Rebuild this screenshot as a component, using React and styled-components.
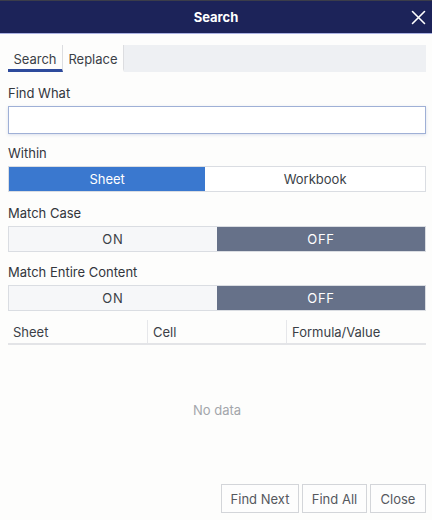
import React from "react";
import styled, { createGlobalStyle } from "styled-components";

const Global = createGlobalStyle`
  html, body { margin: 0; padding: 0; background: #fdfdfc; }
  body { font-family: Inter, "Noto Sans", "Liberation Sans", sans-serif; }
  * { box-sizing: border-box; }
`;

const Dialog = styled.div`
  width: 432px;
  height: 520px;
  display: flex;
  flex-direction: column;
  background: #fdfdfc;
  overflow: hidden;
`;

const Header = styled.div`
  height: 34px;
  flex: none;
  background: #1c2359;
  border-top: 1px solid #3b3d4a;
  border-bottom: 1px solid #aab1e2;
  display: flex;
  align-items: center;
  justify-content: center;
  position: relative;
`;

const Title = styled.div`
  color: #fff;
  font-size: 13px;
  font-weight: 700;
`;

const CloseIcon = styled.button`
  position: absolute;
  right: 6px;
  top: 8px;
  width: 16px;
  height: 16px;
  padding: 0;
  border: 0;
  background: transparent;
  display: flex;
  align-items: center;
  justify-content: center;
`;

const Body = styled.div`
  flex: 1;
  display: flex;
  flex-direction: column;
  padding: 11px 6px 7px 8px;
`;

const Tabs = styled.div`
  display: flex;
  height: 27px;
  align-items: stretch;
`;

const Tab = styled.div`
  width: ${(p) => p.$w}px;
  display: flex;
  align-items: center;
  justify-content: center;
  font-size: 13px;
  color: #3b3f47;
  border-right: 1px solid #dcdde0;
  border-bottom: 3px solid ${(p) => (p.$active ? "#2d4a9c" : "transparent")};
  padding-top: 3px;
`;

const TabFill = styled.div`
  flex: 1;
  background: #eef0f3;
`;

const Label = styled.div`
  font-size: 13px;
  color: #33363d;
  line-height: 16px;
  margin-top: ${(p) => p.$mt || 12}px;
  margin-bottom: ${(p) => p.$mb || 5}px;
`;

const Input = styled.input`
  height: 28px;
  width: 100%;
  border: 1px solid #9fb0d6;
  box-shadow: 0 1px 3px rgba(120, 140, 190, 0.25);
  background: #fff;
  outline: none;
  font-family: inherit;
  font-size: 13px;
  padding: 0 6px;
`;

const Segmented = styled.div`
  display: flex;
  height: 26px;
  border: 1px solid #dadde2;
`;

const Segment = styled.div`
  flex: ${(p) => p.$flex || 1};
  display: flex;
  align-items: center;
  justify-content: center;
  font-size: 13px;
  letter-spacing: ${(p) => (p.$caps ? "0.06em" : "0")};
  background: ${(p) => p.$bg};
  color: ${(p) => p.$fg};
`;

const Table = styled.div`
  margin-top: 9px;
  flex: 1;
  display: flex;
  flex-direction: column;
`;

const HeadRow = styled.div`
  display: grid;
  grid-template-columns: 139px 139px 1fr;
  height: 25px;
  border-bottom: 2px solid #e3e4e7;
`;

const HeadCell = styled.div`
  display: flex;
  align-items: center;
  padding-left: 5px;
  font-size: 13px;
  color: #3b3f47;
  border-left: ${(p) => (p.$first ? "none" : "1px solid #e6e7ea")};
`;

const Empty = styled.div`
  height: 130px;
  display: flex;
  align-items: center;
  justify-content: center;
  font-size: 13px;
  color: #a3a6ab;
`;

const Footer = styled.div`
  margin-top: auto;
  display: flex;
  justify-content: flex-end;
  gap: 3px;
`;

const Button = styled.button`
  width: ${(p) => p.$w}px;
  height: 29px;
  border: 1px solid #d3d5d9;
  background: #fdfdfd;
  font-family: inherit;
  font-size: 13px;
  color: #55585e;
  padding: 0;
`;

export default function App() {
  return (
    <Dialog>
      <Global />
      <Header>
        <Title>Search</Title>
        <CloseIcon aria-label="Close">
          <svg width="15" height="15" viewBox="0 0 15 15">
            <path d="M1.5 1.5 L13.5 13.5 M13.5 1.5 L1.5 13.5" stroke="#fff" strokeWidth="1.6" strokeLinecap="round" />
          </svg>
        </CloseIcon>
      </Header>
      <Body>
        <Tabs>
          <Tab $w={55} $active>Search</Tab>
          <Tab $w={61}>Replace</Tab>
          <TabFill />
        </Tabs>
        <Label $mt={13} $mb={5}>Find What</Label>
        <Input />
        <Label $mt={11}>Within</Label>
        <Segmented>
          <Segment $bg="#3a78cf" $fg="#fff">Sheet</Segment>
          <Segment $bg="#fff" $fg="#3b3f47" $flex={1.12}>Workbook</Segment>
        </Segmented>
        <Label $mt={13} $mb={5}>Match Case</Label>
        <Segmented>
          <Segment $caps $bg="#f6f7f9" $fg="#3b3f47">ON</Segment>
          <Segment $caps $bg="#667189" $fg="#fff">OFF</Segment>
        </Segmented>
        <Label $mt={12}>Match Entire Content</Label>
        <Segmented>
          <Segment $caps $bg="#f6f7f9" $fg="#3b3f47">ON</Segment>
          <Segment $caps $bg="#667189" $fg="#fff">OFF</Segment>
        </Segmented>
        <Table>
          <HeadRow>
            <HeadCell $first>Sheet</HeadCell>
            <HeadCell>Cell</HeadCell>
            <HeadCell>Formula/Value</HeadCell>
          </HeadRow>
          <Empty>No data</Empty>
          <Footer>
            <Button $w={78}>Find Next</Button>
            <Button $w={65}>Find All</Button>
            <Button $w={56}>Close</Button>
          </Footer>
        </Table>
      </Body>
    </Dialog>
  );
}
